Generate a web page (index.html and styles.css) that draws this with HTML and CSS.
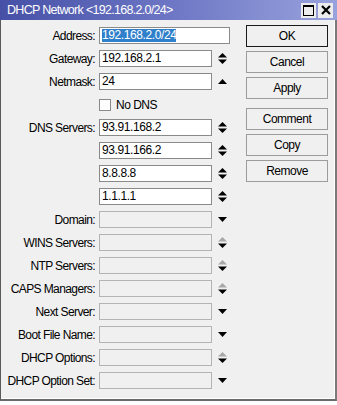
FILE: index.html
```html
<!DOCTYPE html>
<html lang="en">
<head>
    <meta charset="UTF-8">
    <title>DHCP Network</title>
    <link rel="stylesheet" href="styles.css">
</head>
<body>

    <div class="window">
        <div class="titlebar">
            <span class="title">DHCP Network &lt;192.168.2.0/24&gt;</span>
            <div class="winbtns">
                <span class="winbtn"><svg width="11" height="11" viewBox="0 0 11 11"><rect x="0.5" y="0.5" width="10" height="10" fill="none" stroke="#000"/><rect x="0" y="0" width="11" height="2" fill="#000"/></svg></span>
                <span class="winbtn"><svg width="10" height="10" viewBox="0 0 10 10"><path d="M1 1 L9 9 M9 1 L1 9" stroke="#000" stroke-width="2.2"/></svg></span>
            </div>
        </div>

        <div class="content">
            <div class="form">
                <div class="row">
                    <label class="lbl">Address:</label>
                    <div class="field wide"><span class="sel">192.168.2.0/24</span></div>
                </div>
                <div class="row">
                    <label class="lbl">Gateway:</label>
                    <div class="field">192.168.2.1</div>
                    <span class="arrow"><svg width="9" height="11" viewBox="0 0 9 11"><polygon points="0,4.5 4.5,0 9,4.5"/><polygon points="0,6.5 9,6.5 4.5,11"/></svg></span>
                </div>
                <div class="row">
                    <label class="lbl">Netmask:</label>
                    <div class="field">24</div>
                    <span class="arrow"><svg width="9" height="5" viewBox="0 0 9 5"><polygon points="0,5 4.5,0 9,5"/></svg></span>
                </div>
                <div class="row">
                    <span class="lbl"></span>
                    <span class="check"></span>
                    <span class="checktext">No DNS</span>
                </div>
                <div class="row">
                    <label class="lbl">DNS Servers:</label>
                    <div class="field">93.91.168.2</div>
                    <span class="arrow"><svg width="9" height="11" viewBox="0 0 9 11"><polygon points="0,4.5 4.5,0 9,4.5"/><polygon points="0,6.5 9,6.5 4.5,11"/></svg></span>
                </div>
                <div class="row">
                    <span class="lbl"></span>
                    <div class="field">93.91.166.2</div>
                    <span class="arrow"><svg width="9" height="11" viewBox="0 0 9 11"><polygon points="0,4.5 4.5,0 9,4.5"/><polygon points="0,6.5 9,6.5 4.5,11"/></svg></span>
                </div>
                <div class="row">
                    <span class="lbl"></span>
                    <div class="field">8.8.8.8</div>
                    <span class="arrow"><svg width="9" height="11" viewBox="0 0 9 11"><polygon points="0,4.5 4.5,0 9,4.5"/><polygon points="0,6.5 9,6.5 4.5,11"/></svg></span>
                </div>
                <div class="row">
                    <span class="lbl"></span>
                    <div class="field">1.1.1.1</div>
                    <span class="arrow"><svg width="9" height="11" viewBox="0 0 9 11"><polygon points="0,4.5 4.5,0 9,4.5"/><polygon points="0,6.5 9,6.5 4.5,11"/></svg></span>
                </div>
                <div class="row">
                    <label class="lbl">Domain:</label>
                    <div class="field off"></div>
                    <span class="arrow"><svg width="9" height="5" viewBox="0 0 9 5"><polygon points="0,0 9,0 4.5,5"/></svg></span>
                </div>
                <div class="row">
                    <label class="lbl">WINS Servers:</label>
                    <div class="field off"></div>
                    <span class="arrow"><svg width="9" height="11" viewBox="0 0 9 11"><polygon points="0,4.5 4.5,0 9,4.5" fill="#a8a8a8"/><polygon points="0,6.5 9,6.5 4.5,11"/></svg></span>
                </div>
                <div class="row">
                    <label class="lbl">NTP Servers:</label>
                    <div class="field off"></div>
                    <span class="arrow"><svg width="9" height="11" viewBox="0 0 9 11"><polygon points="0,4.5 4.5,0 9,4.5" fill="#a8a8a8"/><polygon points="0,6.5 9,6.5 4.5,11"/></svg></span>
                </div>
                <div class="row">
                    <label class="lbl">CAPS Managers:</label>
                    <div class="field off"></div>
                    <span class="arrow"><svg width="9" height="11" viewBox="0 0 9 11"><polygon points="0,4.5 4.5,0 9,4.5" fill="#a8a8a8"/><polygon points="0,6.5 9,6.5 4.5,11"/></svg></span>
                </div>
                <div class="row">
                    <label class="lbl">Next Server:</label>
                    <div class="field off"></div>
                    <span class="arrow"><svg width="9" height="5" viewBox="0 0 9 5"><polygon points="0,0 9,0 4.5,5"/></svg></span>
                </div>
                <div class="row">
                    <label class="lbl">Boot File Name:</label>
                    <div class="field off"></div>
                    <span class="arrow"><svg width="9" height="5" viewBox="0 0 9 5"><polygon points="0,0 9,0 4.5,5"/></svg></span>
                </div>
                <div class="row">
                    <label class="lbl">DHCP Options:</label>
                    <div class="field off"></div>
                    <span class="arrow"><svg width="9" height="11" viewBox="0 0 9 11"><polygon points="0,4.5 4.5,0 9,4.5" fill="#a8a8a8"/><polygon points="0,6.5 9,6.5 4.5,11"/></svg></span>
                </div>
                <div class="row">
                    <label class="lbl">DHCP Option Set:</label>
                    <div class="field off"></div>
                    <span class="arrow"><svg width="9" height="5" viewBox="0 0 9 5"><polygon points="0,0 9,0 4.5,5"/></svg></span>
                </div>
            </div>

            <div class="buttons">
                <button class="btn default">OK</button>
                <button class="btn">Cancel</button>
                <button class="btn">Apply</button>
                <button class="btn group">Comment</button>
                <button class="btn">Copy</button>
                <button class="btn">Remove</button>
            </div>
        </div>
    </div>

</body>
</html>
```

FILE: styles.css
```css
body {
    margin: 0;
    background: #ffffff;
    font-family: "Liberation Sans", Arial, sans-serif;
    font-size: 12px;
    color: #000;
}
.window {
    box-sizing: border-box;
    width: 337px;
    height: 401px;
    background: #f0f0f0;
    border-left: 1px solid #5a5a5a;
    border-right: 2px solid #7a7a7a;
    border-bottom: 2px solid #6a6a6a;
    box-shadow: inset -1px -1px 0 #ffffff;
}
.titlebar {
    height: 20px;
    margin-left: -1px;
    margin-right: -2px;
    display: flex;
    align-items: center;
    justify-content: space-between;
    background: linear-gradient(to right, #4650a6, #6c76c4 50%, #98a2dc);
    color: #fff;
}
.title {
    padding-left: 7px;
    font-size: 12.5px;
    letter-spacing: -0.7px;
}
.winbtns {
    display: flex;
    gap: 2px;
    padding-right: 4px;
}
.winbtn {
    width: 15px;
    height: 15px;
    background: #ececec;
    display: flex;
    align-items: center;
    justify-content: center;
}
.content {
    display: flex;
    align-items: flex-start;
}
.form {
    width: 230px;
    padding-top: 7px;
    display: flex;
    flex-direction: column;
    gap: 6px;
}
.row {
    display: flex;
    align-items: center;
    height: 17px;
}
.lbl {
    width: 94px;
    flex: none;
    text-align: right;
    letter-spacing: -0.6px;
}
.field {
    box-sizing: border-box;
    width: 113px;
    height: 17px;
    margin-left: 4px;
    padding-left: 2px;
    background: #fff;
    border: 1px solid #8a8a8a;
    line-height: 15px;
    letter-spacing: -0.4px;
    white-space: nowrap;
}
.field.wide {
    width: 131px;
}
.field.off {
    background: #f0f0f0;
    border-color: #b4b4b4;
}
.sel {
    display: inline-block;
    line-height: 13px;
    background: #2f7fcb;
    color: #fff;
    vertical-align: top;
    margin-top: 1px;
}
.arrow {
    margin-left: 6px;
    width: 9px;
    display: flex;
    align-items: center;
}
.check {
    box-sizing: border-box;
    width: 12px;
    height: 12px;
    margin-left: 4px;
    background: #fff;
    border: 1px solid #8a8a8a;
}
.checktext {
    margin-left: 5px;
    letter-spacing: -0.5px;
}
.buttons {
    margin-left: 15px;
    padding-top: 5px;
    display: flex;
    flex-direction: column;
    gap: 4px;
}
.btn {
    box-sizing: border-box;
    width: 82px;
    height: 22px;
    padding: 0;
    background: #f0f0f0;
    border: 1px solid #9c9c9c;
    font-family: "Liberation Sans", Arial, sans-serif;
    font-size: 12px;
    letter-spacing: -0.5px;
    color: #000;
}
.btn.default {
    border-color: #1a1a1a;
}
.btn.group {
    margin-top: 5px;
}
```
